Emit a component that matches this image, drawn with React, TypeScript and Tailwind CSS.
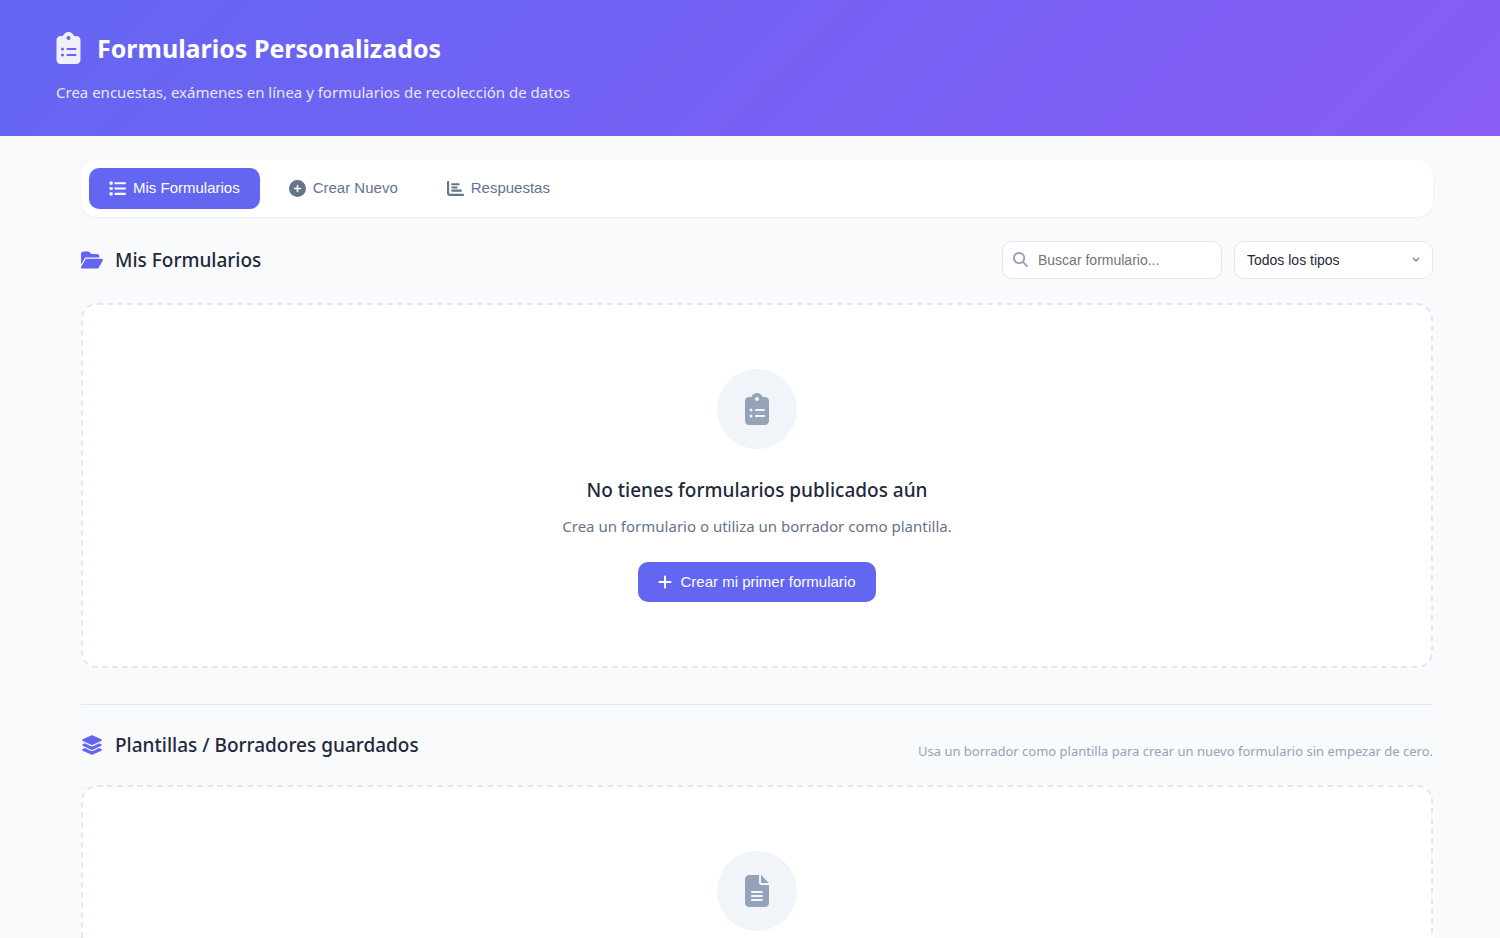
import type { ReactNode } from 'react'
import {
  FaChartBar,
  FaCirclePlus,
  FaClipboardList,
  FaFileLines,
  FaFolderOpen,
  FaLayerGroup,
  FaList,
  FaMagnifyingGlass,
  FaPlus,
} from 'react-icons/fa6'

const tabs = [
  { id: 'list', label: 'Mis Formularios', icon: FaList, active: true },
  { id: 'create', label: 'Crear Nuevo', icon: FaCirclePlus, active: false },
  { id: 'answers', label: 'Respuestas', icon: FaChartBar, active: false },
]

interface EmptyStateProps {
  icon: ReactNode
  children?: ReactNode
}

function EmptyState({ icon, children }: EmptyStateProps) {
  return (
    <div className="flex flex-col items-center px-8 py-16 text-center bg-white border-2 border-dashed border-[#e2e8f0] rounded-2xl">
      <div className="flex items-center justify-center w-20 h-20 mb-6 rounded-full bg-[#f1f5f9] text-[#94a3b8]">
        {icon}
      </div>
      {children}
    </div>
  )
}

export default function App() {
  return (
    <div className="min-h-screen bg-[#f9fafc] font-['Segoe_UI','Noto_Sans',sans-serif] text-[#1e293b]">
      <header className="px-14 py-8 bg-[linear-gradient(135deg,#6366f1,#8b5cf6_108%)] text-white">
        <h1 className="flex items-center gap-4 text-[25px] leading-8 font-bold">
          <FaClipboardList size={32} className="w-[25px] opacity-90" />
          Formularios Personalizados
        </h1>
        <p className="mt-4 text-[15px] leading-6 opacity-85">
          Crea encuestas, exámenes en línea y formularios de recolección de datos
        </p>
      </header>

      <main className="pt-6 pb-8 pl-[81px] pr-[67px]">
        <nav className="flex gap-[9px] p-2 mb-6 bg-white rounded-2xl shadow-[0_1px_3px_rgba(0,0,0,0.06)]">
          {tabs.map(({ id, label, icon: Icon, active }) => (
            <button
              key={id}
              type="button"
              className={`flex items-center gap-[7px] h-[41px] px-5 rounded-[10px] font-['Liberation_Sans',Arial,sans-serif] text-[15px] ${
                active ? 'bg-[#6366f1] text-white' : 'text-[#64748b]'
              }`}
            >
              <Icon size={17} />
              {label}
            </button>
          ))}
        </nav>

        <section>
          <div className="flex items-center justify-between mb-6">
            <h2 className="flex items-center gap-3 text-[19px] leading-8 font-medium">
              <FaFolderOpen size={22} className="text-[#6366f1]" />
              Mis Formularios
            </h2>
            <div className="flex gap-3 font-['Liberation_Sans',Arial,sans-serif] text-sm">
              <div className="relative">
                <FaMagnifyingGlass size={15} className="absolute left-[11px] top-[11px] text-[#94a3b8]" />
                <input
                  type="text"
                  aria-label="Buscar formulario"
                  placeholder="Buscar formulario..."
                  className="w-[220px] h-[38px] pl-[35px] pr-3 bg-white border border-[#e2e8f0] rounded-[10px] placeholder:text-[#757575]"
                />
              </div>
              <div className="relative">
                <select
                  aria-label="Tipo de formulario"
                  className="w-[199px] h-[38px] pl-3 pr-8 bg-white border border-[#e2e8f0] rounded-[10px] appearance-none"
                >
                  <option>Todos los tipos</option>
                  <option>Encuesta</option>
                  <option>Examen</option>
                </select>
                <svg viewBox="0 0 8 6" className="absolute right-[13px] top-4 w-2 h-1.5 pointer-events-none text-[#64748b]">
                  <path d="M1 1l3 3 3-3" fill="none" stroke="currentColor" strokeWidth="1.2" />
                </svg>
              </div>
            </div>
          </div>

          <EmptyState icon={<FaClipboardList size={32} />}>
            <h3 className="mb-2 text-[19px] leading-[34px] font-medium">No tienes formularios publicados aún</h3>
            <p className="mb-6 text-[15px] leading-[23px] text-[#64748b]">
              Crea un formulario o utiliza un borrador como plantilla.
            </p>
            <button
              type="button"
              className="flex items-center gap-2 h-10 px-5 bg-[#6366f1] text-white rounded-[10px] font-['Liberation_Sans',Arial,sans-serif] text-[15px]"
            >
              <FaPlus size={16} className="w-3.5" />
              Crear mi primer formulario
            </button>
          </EmptyState>
        </section>

        <section className="pt-6 mt-9 border-t border-[#e2e8f0]">
          <div className="flex items-end justify-between mb-6">
            <h2 className="flex items-center gap-3 text-[19px] leading-8 font-medium">
              <FaLayerGroup size={22} className="text-[#6366f1]" />
              Plantillas / Borradores guardados
            </h2>
            <p className="text-[13px] leading-5 text-[#94a3b8]">
              Usa un borrador como plantilla para crear un nuevo formulario sin empezar de cero.
            </p>
          </div>

          <EmptyState icon={<FaFileLines size={32} />} />
        </section>
      </main>
    </div>
  )
}
